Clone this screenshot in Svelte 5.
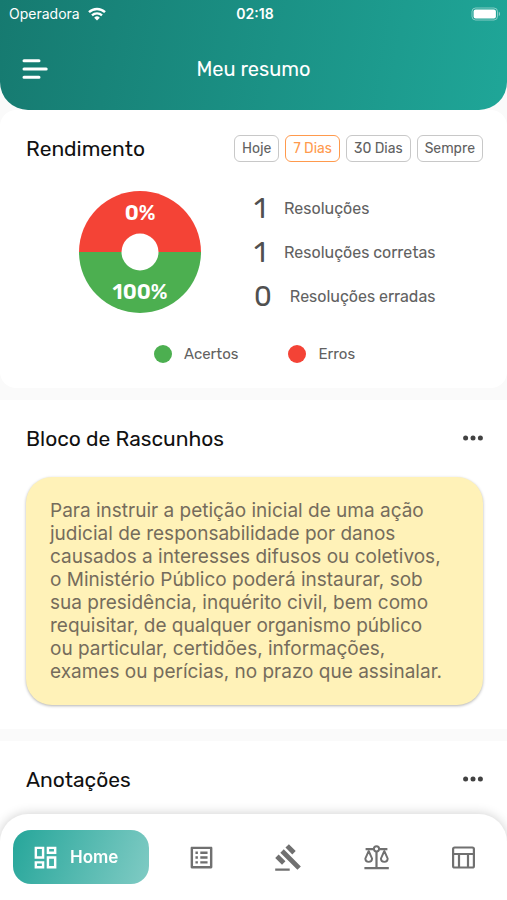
<script lang="ts">
	interface Stat {
		value: number;
		label: string;
	}

	const periods = ['Hoje', '7 Dias', '30 Dias', 'Sempre'];

	const stats: Stat[] = [
		{ value: 1, label: 'Resoluções' },
		{ value: 1, label: 'Resoluções corretas' },
		{ value: 0, label: 'Resoluções erradas' }
	];

	const draft =
		'Para instruir a petição inicial de uma ação judicial de responsabilidade por danos causados a interesses difusos ou coletivos, o Ministério Público poderá instaurar, sob sua presidência, inquérito civil, bem como requisitar, de qualquer organismo público ou particular, certidões, informações, exames ou perícias, no prazo que assinalar.';

	let activePeriod = $state('7 Dias');
</script>

{#snippet moreButton(label: string)}
	<button class="more" aria-label={label}>
		<svg width="20" height="6" viewBox="0 0 20 6" fill="currentColor">
			<circle cx="2.6" cy="3" r="2.5" />
			<circle cx="10" cy="3" r="2.5" />
			<circle cx="17.4" cy="3" r="2.5" />
		</svg>
	</button>
{/snippet}

<div class="app">
	<header class="header">
		<div class="status-bar">
			<span class="carrier">
				Operadora
				<svg width="18" height="14" viewBox="0 0 18 14" fill="none" stroke="currentColor">
					<path d="M1 5.2a11.6 11.6 0 0 1 16 0" stroke-width="2.4" />
					<path d="M4 8.4a7.2 7.2 0 0 1 10 0" stroke-width="2.3" />
					<path d="M9 13.6 6.2 10.7a4 4 0 0 1 5.6 0z" fill="currentColor" stroke="none" />
				</svg>
			</span>
			<span class="clock">02:18</span>
			<svg class="battery" width="30" height="14" viewBox="0 0 30 14">
				<rect x="1" y="1" width="25.5" height="12" rx="3.6" fill="none" stroke="#fff" stroke-opacity=".45" />
				<rect x="2.6" y="2.6" width="22.3" height="8.8" rx="2" fill="#fff" />
				<path d="M27.8 4.8c1.6.6 1.6 3.8 0 4.4z" fill="#fff" fill-opacity=".5" />
			</svg>
		</div>
		<div class="title-bar">
			<button class="menu" aria-label="Menu">
				<svg width="26" height="20" viewBox="0 0 26 20" stroke="currentColor" stroke-width="3" stroke-linecap="round">
					<path d="M2 1.8h15M2 10h22.2M2 18.2h15" />
				</svg>
			</button>
			<h1>Meu resumo</h1>
		</div>
	</header>

	<main>
		<section class="card summary">
			<div class="card-header">
				<h2>Rendimento</h2>
				<div class="periods">
					{#each periods as period}
						<button
							class="period"
							class:active={activePeriod === period}
							onclick={() => (activePeriod = period)}
						>
							{period}
						</button>
					{/each}
				</div>
			</div>

			<div class="performance">
				<svg class="donut" width="122" height="122" viewBox="0 0 122 122">
					<path d="M0 61a61 61 0 0 1 122 0z" fill="#f44336" />
					<path d="M0 61a61 61 0 0 0 122 0z" fill="#4caf50" />
					<circle cx="61" cy="61" r="18.5" fill="#fff" />
					<text x="61" y="29">0%</text>
					<text x="61" y="108">100%</text>
				</svg>
				<ul class="stats">
					{#each stats as stat}
						<li>
							<span class="stat-value">{stat.value}</span>
							<span>{stat.label}</span>
						</li>
					{/each}
				</ul>
			</div>

			<div class="legend">
				<span class="legend-item"><i class="dot right"></i>Acertos</span>
				<span class="legend-item"><i class="dot wrong"></i>Erros</span>
			</div>
		</section>

		<section class="card drafts">
			<div class="card-header">
				<h2>Bloco de Rascunhos</h2>
				{@render moreButton('Opções do bloco de rascunhos')}
			</div>
			<p class="note">{draft}</p>
		</section>

		<section class="card notes">
			<div class="card-header">
				<h2>Anotações</h2>
				{@render moreButton('Opções das anotações')}
			</div>
		</section>
	</main>

	<nav class="tab-bar">
		<a href="#home" class="home">
			<svg width="29" height="29" viewBox="0 0 24 24" fill="currentColor">
				<path d="M19 5v2h-4V5h4M9 5v6H5V5h4m10 8v6h-4v-6h4M9 17v2H5v-2h4M21 3h-8v6h8V3zM11 3H3v10h8V3zm10 8h-8v10h8V11zm-10 4H3v6h8v-6z" />
			</svg>
			Home
		</a>
		<a href="#lista" class="tab" aria-label="Lista">
			<svg width="29" height="29" viewBox="0 0 24 24" fill="currentColor">
				<path d="M19 5v14H5V5h14m1.1-2H3.9c-.5 0-.9.4-.9.9v16.2c0 .4.4.9.9.9h16.2c.4 0 .9-.5.9-.9V3.9c0-.5-.5-.9-.9-.9zM11 7h6v2h-6V7zm0 4h6v2h-6v-2zm0 4h6v2h-6v-2zM7 7h2v2H7V7zm0 4h2v2H7v-2zm0 4h2v2H7v-2z" />
			</svg>
		</a>
		<a href="#leis" class="tab" aria-label="Leis">
			<svg width="29" height="29" viewBox="0 0 24 24" fill="currentColor">
				<path d="M1 21h12v2H1zM5.245 8.07l2.83-2.827 14.14 14.142-2.828 2.828zM12.317 1l5.657 5.656-2.83 2.83-5.654-5.66zM3.825 9.485l5.657 5.657-2.828 2.828-5.657-5.657z" />
			</svg>
		</a>
		<a href="#justica" class="tab" aria-label="Justiça">
			<svg width="29" height="29" viewBox="0 0 29 29" fill="none" stroke="currentColor" stroke-width="2.2">
				<path d="M2.4 25.2h24.4M14.5 9v16M3.6 6.2h8M17.4 6.2h8" />
				<circle cx="14.5" cy="5.8" r="2.6" stroke-width="2" />
				<path d="M6.7 8 3.3 15.6c0 2.3 1.4 3.3 3.4 3.3s3.4-1 3.4-3.3zM22.3 8l-3.4 7.6c0 2.3 1.4 3.3 3.4 3.3s3.4-1 3.4-3.3z" stroke-width="1.9" stroke-linejoin="round" />
			</svg>
		</a>
		<a href="#tabela" class="tab" aria-label="Tabela">
			<svg width="29" height="29" viewBox="0 0 29 29" fill="none" stroke="currentColor" stroke-width="2.2">
				<rect x="4.1" y="4.5" width="20.8" height="20" rx="1.6" />
				<path d="M4.1 11h20.8M10 11v13.5M19 11v13.5" />
			</svg>
		</a>
	</nav>
</div>

<style>
	:global(body) {
		margin: 0;
		background: #fafafa;
	}

	.app {
		height: 100vh;
		overflow: hidden;
		font-family: Rubik, Inter, 'Noto Sans', sans-serif;
		font-size: 14px;
		color: #616161;
	}

	button {
		padding: 0;
		border: none;
		background: none;
		font: inherit;
		color: inherit;
		cursor: pointer;
	}

	svg {
		display: block;
	}

	h1,
	h2,
	p,
	ul {
		margin: 0;
		padding: 0;
	}

	.header {
		height: 110px;
		color: #fff;
		background: linear-gradient(100deg, #167a70, #1fa698);
		border-radius: 0 0 28px 28px;
	}

	.status-bar {
		display: grid;
		grid-template-columns: 1fr auto 1fr;
		align-items: center;
		height: 27px;
		padding: 0 6px 0 9px;
		font-family: Inter, 'Noto Sans', sans-serif;
	}

	.carrier {
		display: flex;
		align-items: center;
		gap: 8px;
	}

	.clock {
		font-weight: 600;
	}

	.battery {
		justify-self: end;
	}

	.title-bar {
		display: grid;
		grid-template-columns: 1fr auto 1fr;
		align-items: center;
		height: 83px;
		padding: 0 22px;
	}

	.menu {
		justify-self: start;
	}

	h1 {
		font-size: 20px;
		font-weight: 400;
	}

	main {
		display: flex;
		flex-direction: column;
		gap: 12px;
	}

	.card {
		padding: 24px 24px 24px 26px;
		background: #fff;
	}

	.summary {
		border-radius: 16px;
	}

	.card-header {
		display: flex;
		align-items: center;
		justify-content: space-between;
		height: 28px;
	}

	h2 {
		font-size: 21px;
		font-weight: 400;
		color: #111;
	}

	.periods {
		display: flex;
		gap: 6px;
	}

	.period {
		height: 27px;
		padding: 0 7px;
		border: 1px solid #c8c8c8;
		border-radius: 6px;
		font-size: 14px;
	}

	.period.active {
		border-color: #ff9a4d;
		color: #ff9a4d;
	}

	.performance {
		display: flex;
		align-items: center;
		gap: 53px;
		margin: 24px 0 0 53px;
	}

	.donut text {
		font-size: 21px;
		font-weight: 600;
		text-anchor: middle;
		fill: #fff;
	}

	.stats {
		list-style: none;
	}

	.stats li {
		display: flex;
		align-items: center;
		gap: 18px;
		height: 44px;
		font-size: 16px;
	}

	.stat-value {
		font-size: 28px;
		color: #505050;
	}

	.legend {
		display: flex;
		justify-content: center;
		gap: 50px;
		margin-top: 26px;
	}

	.legend-item {
		display: flex;
		align-items: center;
		gap: 12px;
		font-size: 15px;
		line-height: 20px;
	}

	.dot {
		width: 18px;
		height: 18px;
		border-radius: 50%;
	}

	.right {
		background: #4caf50;
	}

	.wrong {
		background: #f44336;
	}

	.more {
		padding: 8px 0;
		color: #424242;
	}

	.note {
		margin-top: 25px;
		padding: 22px 36px 22px 24px;
		border-radius: 26px;
		background: #fff2b8;
		box-shadow: 0 1px 3px rgba(0, 0, 0, 0.3);
		font-family: Inter, 'Noto Sans', sans-serif;
		font-size: 19px;
		line-height: 23px;
		color: #756c5c;
	}

	.notes {
		min-height: 120px;
	}

	.tab-bar {
		position: fixed;
		right: 0;
		bottom: 0;
		left: 0;
		display: flex;
		align-items: center;
		height: 86px;
		padding-left: 13px;
		border-radius: 28px 28px 0 0;
		background: #fff;
		box-shadow: 0 0 12px rgba(0, 0, 0, 0.2);
		box-sizing: border-box;
	}

	.home {
		display: flex;
		align-items: center;
		gap: 10px;
		width: 136px;
		height: 54px;
		margin-right: 9px;
		padding-left: 18px;
		border-radius: 18px;
		background: linear-gradient(110deg, #26a69a, #80cbc4);
		box-sizing: border-box;
		color: #fff;
		font-family: Inter, 'Noto Sans', sans-serif;
		font-size: 17px;
		font-weight: 600;
		text-decoration: none;
	}

	.tab {
		display: flex;
		flex: 1;
		justify-content: center;
		color: #707070;
	}
</style>
